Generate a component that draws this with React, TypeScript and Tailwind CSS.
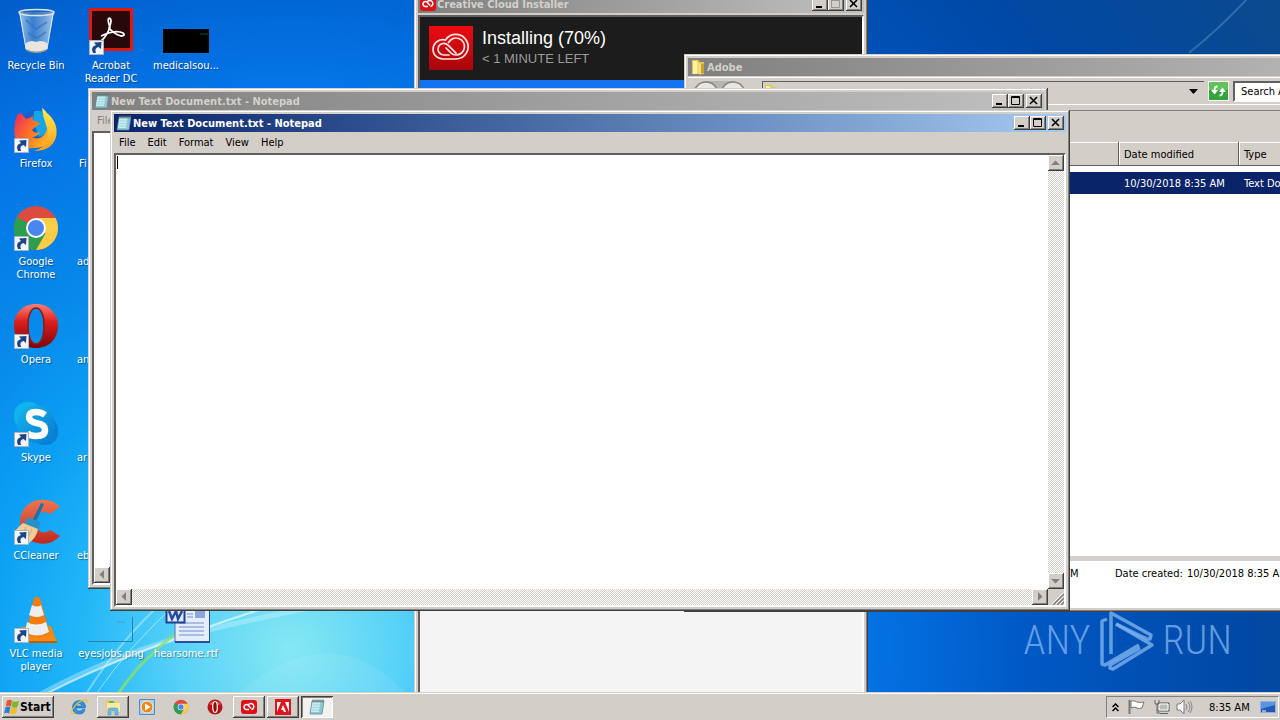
import type { ReactNode } from "react";

const UI = "font-['DejaVu_Sans_Condensed','DejaVu_Sans',sans-serif] text-[11px] leading-[13px]";
const RAISED =
  "bg-[#d4cec8] shadow-[inset_-1px_-1px_0_#404040,inset_1px_1px_0_#ffffff,inset_-2px_-2px_0_#808080]";
const SUNKEN = "border-2 border-t-[#606060] border-l-[#606060] border-r-white border-b-white";
const FRAME =
  "bg-[#d4cec8] p-1 shadow-[inset_-1px_-1px_0_#404040,inset_1px_1px_0_#d4cec8,inset_-2px_-2px_0_#808080,inset_2px_2px_0_#ffffff]";
const TRACK =
  "bg-[repeating-conic-gradient(#ffffff_0_25%,#d4cec8_0_50%)] bg-[length:2px_2px]";

/* ---------- icons ---------- */

function RecycleBinIcon() {
  return (
    <svg width="48" height="48" viewBox="0 0 48 48">
      <defs>
        <linearGradient id="bin" x1="0" x2="1">
          <stop offset="0" stopColor="#c8dcf0" stopOpacity=".8" />
          <stop offset=".4" stopColor="#5f92d0" stopOpacity=".6" />
          <stop offset="1" stopColor="#c4d8ec" stopOpacity=".85" />
        </linearGradient>
      </defs>
      <path d="M7 4 42 4 35 42Q24 47 14 42Z" fill="url(#bin)" />
      <path d="M13 36Q18 31 24 34Q31 31 36 36L35 42Q24 47 14 42Z" fill="#e9e6e2" />
      <path d="M14 41Q24 46 35 41L34 43Q24 47 15 43Z" fill="#97948f" />
      <path d="m14 12 10 9 11-7M16 25l9 5 9-6" stroke="#326fb8" strokeWidth="2" fill="none" opacity=".6" />
      <ellipse cx="24.500" cy="4.500" rx="17.500" ry="3" fill="#3a6aa4" fillOpacity=".4" stroke="#dbe3ea" strokeWidth="1.500" />
      <path d="m8 6 6 35M41 6l-6 35" stroke="#dce8f4" strokeWidth="1" fill="none" />
    </svg>
  );
}

function AcrobatIcon() {
  return (
    <svg width="48" height="48" viewBox="0 0 48 48">
      <path d="M2 0h44v43H2z" fill="#e2180c" />
      <path d="M5 3h38v37H5z" fill="#29080b" />
      <path
        d="M22 10q-2 2 1 9-3 9-9 14 1 3-4 6M22 10q4 1 0 10 5 6 12 8 5 0 2-3-7-4-22 3"
        stroke="#fff" strokeWidth="1.800" fill="none"
      />
    </svg>
  );
}

function FirefoxIcon() {
  return (
    <svg width="48" height="48" viewBox="0 0 48 48">
      <defs>
        <linearGradient id="ff" x1="0" y1=".2" x2="1" y2=".7">
          <stop offset="0" stopColor="#ef3158" />
          <stop offset=".5" stopColor="#ff7a1f" />
          <stop offset="1" stopColor="#ffc52b" />
        </linearGradient>
        <linearGradient id="ff2" x1="0" y1="0" x2="0" y2="1">
          <stop offset="0" stopColor="#fff04a" />
          <stop offset="1" stopColor="#ff9a1e" />
        </linearGradient>
      </defs>
      <circle cx="25" cy="23" r="19" fill="#195fc9" />
      <path d="M22 5Q33 3 38 12L36 27 27 31 21 15Z" fill="#13a5e8" />
      <path d="M5 9 9 7l5 6q4-1 7-3-1 4 1 5 5 1 6 3l-5 3-3 3q2 4 8 2-3 5-8 5 6 4 12-2 5-6 2-13l6-1q5 11-2 19-6 9-17 8Q8 44 4 34 0 24 5 9Z" fill="url(#ff)" />
      <path d="M30 2q2 1 5 5 12 10 9 24-4 14-22 14 10-3 13-11 2-8-1-15-3-8-4-17Z" fill="url(#ff2)" />
    </svg>
  );
}

function ChromeIcon({ size }: { size: number }) {
  return (
    <svg width={size} height={size} viewBox="0 0 48 48">
      <circle cx="24" cy="24" r="22" fill="#dd4b3e" />
      <path d="M24 24 4.900 13A22 22 0 0 0 24 46l9.500-16.500Z" fill="#2b9e50" />
      <path d="M24 14h19.600A22 22 0 0 1 24 46l9.500-16.500Z" fill="#fccd46" />
      <circle cx="24" cy="24" r="10" fill="#fff" />
      <circle cx="24" cy="24" r="8" fill="#4b86f0" />
    </svg>
  );
}

function OperaIcon({ size }: { size: number }) {
  return (
    <svg width={size} height={size} viewBox="0 0 48 48">
      <defs>
        <linearGradient id="op" x1="0" y1="0" x2="0" y2="1">
          <stop offset="0" stopColor="#ff8078" />
          <stop offset=".4" stopColor="#dc1f1c" />
          <stop offset="1" stopColor="#7d0508" />
        </linearGradient>
      </defs>
      <path fillRule="evenodd" d="M24 2C11 2 2 11 2 24s9 22 22 22 22-9 22-22S37 2 24 2Zm0 4c5 0 8 7 8 18s-3 18-8 18-8-7-8-18 3-18 8-18Z" fill="url(#op)" />
      <path d="M24 6c5 0 8 7 8 18s-3 18-8 18-8-7-8-18 3-18 8-18Z" stroke="#8f1716" strokeWidth="1.500" fill="none" />
    </svg>
  );
}

function OperaSmallIcon() {
  return (
    <svg width="16" height="16" viewBox="0 0 16 16">
      <circle cx="8" cy="8" r="7.500" fill="#b81414" />
      <path d="M2 5q6-6 12 0-6 3-12 0Z" fill="#ee6a62" opacity=".8" />
      <ellipse cx="8" cy="8" rx="2.300" ry="5.500" fill="#8f0c0c" stroke="#fff" strokeWidth="1.200" />
    </svg>
  );
}

function SkypeIcon() {
  return (
    <svg width="48" height="48" viewBox="0 0 48 48">
      <defs>
        <linearGradient id="sk" x1="0" y1="0" x2="1" y2="1">
          <stop offset="0" stopColor="#13b5ee" />
          <stop offset="1" stopColor="#087bd0" />
        </linearGradient>
      </defs>
      <rect x="2" y="2" width="28" height="28" rx="13" fill="#10b4ec" />
      <rect x="20" y="18" width="26" height="27" rx="12" fill="#0981d2" />
      <circle cx="24" cy="24" r="19" fill="url(#sk)" />
      <path d="M33 15q-4-3-9-3-7 0-7 5 0 4 7 6 9 1 9 7 0 6-9 6-6 0-9-3" stroke="#fff" strokeWidth="6.500" fill="none" />
    </svg>
  );
}

function CCleanerIcon() {
  return (
    <svg width="48" height="48" viewBox="0 0 48 48">
      <defs>
        <linearGradient id="cc" x1="0" y1="0" x2="0" y2="1">
          <stop offset="0" stopColor="#ef7650" />
          <stop offset="1" stopColor="#c0271d" />
        </linearGradient>
      </defs>
      <path d="m48 9-10 7q-7-5-13 2-5 8 1 14 6 5 12 0l10 6q-9 10-23 7Q8 41 8 24 9 5 27 2q13-2 21 7Z" fill="url(#cc)" />
      <path d="m29 5 3 1-8 18-4-1Z" fill="#1974ad" />
      <path d="m16 19 12 5-1 8-16-5Z" fill="#2a8fc2" />
      <path d="m11 25 15 6q-1 8-9 14L3 39q-4-4 8-14Z" fill="#f2cb99" />
      <path d="m14 29-5 11m11-9-6 12" stroke="#d4a269" />
    </svg>
  );
}

function VlcIcon() {
  return (
    <svg width="48" height="48" viewBox="0 0 48 48">
      <path d="m10 31 29-1 6 16H2Z" fill="#f38a14" />
      <path d="M2 45h43v2H2z" fill="#bd5e05" />
      <path d="M22 2q4-2 6 0l10 36q-12 7-24 0Z" fill="#f37b10" />
      <path d="m20 9-3 10q8 4 15 0L29 9q-4 3-9 0Zm-5 17-2 10q12 7 24 0l-3-10q-10 5-19 0Z" fill="#eee" />
    </svg>
  );
}

function MedicalIcon() {
  return (
    <svg width="46" height="48" viewBox="0 0 46 48">
      <path d="M0 21h46v24H0z" fill="#000" />
      <path d="M37 26h8" stroke="#0c5530" />
    </svg>
  );
}

function EyesJobsIcon() {
  return (
    <svg width="46" height="48" viewBox="0 0 46 48">
      <path d="M44.500 21v24.500H0" stroke="#2384a8" fill="none" />
      <path d="M29 26h8" stroke="#3aa0d0" />
    </svg>
  );
}

function RtfIcon() {
  return (
    <svg width="48" height="48" viewBox="0 0 48 48">
      <path d="M13 2h35v44H13z" fill="#e4edfb" stroke="#5072b8" />
      <path d="M13 46h35M48 2v44" stroke="#2f4d96" strokeWidth="2" />
      <path d="M33 13h10v9H33z" fill="#8ea6dc" />
      <path d="M25 18h6m-6 3h6M17 27h25M17 31h25M17 35h25M17 39h25" stroke="#6f8bc8" />
      <path d="M4.500 8.500h18v18h-18z" fill="#dfe8fa" stroke="#1d3f93" strokeWidth="2" />
      <path d="m7 15 3 8 4-8 2 8 4-8" stroke="#2749a3" strokeWidth="2.500" fill="none" />
    </svg>
  );
}

function ShortcutArrow() {
  return (
    <svg className="absolute bottom-px left-[2px]" width="15" height="15" viewBox="0 0 15 15">
      <path d="M.5.500h14v14H.5z" fill="#f2f6fb" stroke="#a9b4c2" />
      <path d="M4 13Q1 7 7 5L5 2.500l7.500-.5-.5 7-2.500-2Q5 8 7 13Z" fill="#1d4585" />
    </svg>
  );
}

function NotepadIcon() {
  return (
    <svg width="16" height="16" viewBox="0 0 16 16">
      <path d="M3 2h12l-2 13H1Z" fill="#8fc6d4" stroke="#56818c" strokeWidth=".7" />
      <path d="M3.500 3h8L10 13H2Z" fill="#c5edf2" />
      <path d="m4 6 9 0m-9.500 2.500h9M3 11h9" stroke="#8cc4d0" strokeWidth=".6" />
      <path d="M4 .5v3m2-3v3m2-3v3m2-3v3m2-3v3m2-3v3" stroke="#5c6c70" />
    </svg>
  );
}

function FolderIcon() {
  return (
    <svg width="16" height="16" viewBox="0 0 16 16">
      <path d="M2 1h6l2 2h4v12H2z" fill="#e2c451" />
      <path d="M3 2h4v13H3z" fill="#fbf2a6" />
      <path d="m7 3 4 2v11l-4-2Z" fill="#f3dc74" />
      <path d="M11 5h3v9h-3z" fill="#caa32f" />
    </svg>
  );
}

function CloudMark() {
  return (
    <svg width="44" height="44" viewBox="0 0 44 44">
      <defs>
        <linearGradient id="ccm" x1="0" y1="0" x2="0" y2="1">
          <stop offset="0" stopColor="#ed0b12" />
          <stop offset="1" stopColor="#a6060b" />
        </linearGradient>
      </defs>
      <rect width="44" height="44" fill="url(#ccm)" />
      <g fill="none" stroke="#ffe4e2" strokeWidth="1.700" strokeLinecap="round">
        <path d="M14 33h13a12.300 12.300 0 1 0-10.500-19A9.700 9.700 0 1 0 14 33Z" />
        <path d="M20 29h-5a5.800 5.800 0 1 1 4-9.800l8 8" />
        <path d="M19.500 16.500a8.500 8.500 0 1 1 7.500 12.500q-3 0-5-2l-5-5" />
      </g>
    </svg>
  );
}

function CloudSmallIcon() {
  return (
    <svg width="16" height="16" viewBox="0 0 16 16">
      <rect y="1" width="16" height="14" rx="3" fill="#dd1219" />
      <path d="M8 10.500H5.500a2.500 2.500 0 1 1 2-4l2.500 3M7 6.500a3 3 0 1 1 3.500 4" stroke="#fff" strokeWidth="1.500" fill="none" />
    </svg>
  );
}

function AdobeIcon() {
  return (
    <svg width="16" height="16" viewBox="0 0 16 16">
      <path d="M0 0h16v16H0z" fill="#e2131b" />
      <path d="M2 3h4L2 13Zm8 0h4v10ZM8 6l3.200 7H9l-1-2H6Z" fill="#fff" />
    </svg>
  );
}

function IeIcon() {
  return (
    <svg width="18" height="18" viewBox="0 0 18 18">
      <path d="M15.500 10H6q0 3 3.500 3 2 0 3-1.500h2.500q-1 4.500-5.500 4.500Q2.500 16 2.500 9.500T9.500 2.500Q15.500 3 15.500 10ZM6 8h6q-.5-2.500-3-2.500T6 8Z" fill="#2b92e4" stroke="#1264b4" strokeWidth=".6" />
      <path d="M16.500 5Q18 0 12.500 2.500 6 5 2 12q-2 5 3 3" stroke="#f0c031" strokeWidth="1.200" fill="none" />
    </svg>
  );
}

function ExplorerIcon() {
  return (
    <svg width="18" height="18" viewBox="0 0 18 18">
      <path d="M2 2h6l1 2h7v11H2z" fill="#eecb62" />
      <path d="M3 5h13v9H3z" fill="#faeba4" />
      <path d="M5 3h5v2H5z" fill="#64b85a" />
      <path d="M4 17v-5q0-2 2-2h6q2 0 2 2v5h-3v-4H7v4Z" fill="#6bbce8" stroke="#378fc4" strokeWidth=".5" />
    </svg>
  );
}

function MediaIcon() {
  return (
    <svg width="16" height="16" viewBox="0 0 16 16">
      <path d="M.5.500h15v15H.5z" fill="#a5cff2" stroke="#4f8fc8" />
      <circle cx="8" cy="8" r="6" fill="#f38818" stroke="#fff" strokeWidth=".8" />
      <path d="m6 4.500 5.500 3.500L6 11.500Z" fill="#fff" />
    </svg>
  );
}

function WindowsFlag() {
  return (
    <svg width="16" height="16" viewBox="0 0 16 16">
      <path d="M3 1.500q2.500-1.500 5 0L6.800 7.500q-2.500-1.500-5 0Z" fill="#e8572a" />
      <path d="M8.500 2q2.500 1.500 6.500 0l-1.500 6q-3 1.500-6 0Z" fill="#7ab92f" />
      <path d="M1.500 8.200q2.500-1.500 5 0L5 14.500q-2.500-1.500-5 0Z" fill="#2e7bd0" />
      <path d="M7.200 8.500q2.500 1.500 6 0l-1.500 6q-3 1.500-6 0Z" fill="#f6bd22" />
    </svg>
  );
}

/* ---------- desktop ---------- */

type Shortcut = { label: string; place: string; icon?: ReactNode; arrow?: boolean; align?: string };

const shortcuts: Shortcut[] = [
  { label: "Recycle Bin", place: "col-start-1 row-start-1", icon: <RecycleBinIcon /> },
  { label: "Firefox", place: "col-start-1 row-start-2", icon: <FirefoxIcon />, arrow: true },
  { label: "Google Chrome", place: "col-start-1 row-start-3", icon: <ChromeIcon size={48} />, arrow: true },
  { label: "Opera", place: "col-start-1 row-start-4", icon: <OperaIcon size={48} />, arrow: true },
  { label: "Skype", place: "col-start-1 row-start-5", icon: <SkypeIcon />, arrow: true },
  { label: "CCleaner", place: "col-start-1 row-start-6", icon: <CCleanerIcon />, arrow: true },
  { label: "VLC media player", place: "col-start-1 row-start-7", icon: <VlcIcon />, arrow: true },
  { label: "Acrobat Reader DC", place: "col-start-2 row-start-1", icon: <AcrobatIcon />, arrow: true },
  { label: "Fi", place: "col-start-2 row-start-2", align: "pl-1 text-left" },
  { label: "ad", place: "col-start-2 row-start-3", align: "pl-[2px] text-left" },
  { label: "an", place: "col-start-2 row-start-4", align: "pl-[2px] text-left" },
  { label: "ar", place: "col-start-2 row-start-5", align: "pl-[2px] text-left" },
  { label: "eb", place: "col-start-2 row-start-6", align: "pl-[2px] text-left" },
  { label: "eyesjobs.png", place: "col-start-2 row-start-7", icon: <EyesJobsIcon /> },
  { label: "medicalsou...", place: "col-start-3 row-start-1", icon: <MedicalIcon /> },
  { label: "hearsome.rtf", place: "col-start-3 row-start-7", icon: <RtfIcon /> },
];

function Wallpaper() {
  return (
    <svg className="absolute inset-0" width="100%" height="100%" aria-hidden="true">
      <g fill="none" strokeLinecap="round">
        <path d="M30 700Q110 655 200 632T420 590" stroke="#c9f6ff" strokeWidth="5" opacity=".4" />
        <path d="M46 694Q130 650 290 600" stroke="#fff" strokeWidth="2" opacity=".6" />
        <path d="M86 694Q120 640 165 600" stroke="#d5f7ff" strokeWidth="2" opacity=".45" />
        <path d="M96 694Q130 645 180 600" stroke="#d5f7ff" strokeWidth="1" opacity=".6" />
        <path d="M118 694Q150 645 220 604" stroke="#8be06a" strokeWidth="3" opacity=".8" />
        <path d="M1190 52Q1220 28 1246 0" stroke="#6aa0d0" strokeWidth="2" opacity=".4" />
      </g>
      <path d="M240 692Q330 615 405 692Z" fill="#fff" opacity=".08" />
    </svg>
  );
}

function DesktopIcons() {
  return (
    <ul className="relative grid auto-rows-[98px] grid-cols-[repeat(3,72px)] gap-x-[3px] pt-2 text-white [text-shadow:1px_1px_1px_#00000066]">
      {shortcuts.map((s) => (
        <li key={s.label} className={`${s.place} flex flex-col items-center`}>
          <div className="relative flex h-12 w-12 justify-center">
            {s.icon}
            {s.arrow && <ShortcutArrow />}
          </div>
          <span className={`${s.align ?? "text-center"} mt-[3px] w-full`}>{s.label}</span>
        </li>
      ))}
    </ul>
  );
}

/* ---------- window parts ---------- */

function CaptionButtons({ maxDisabled }: { maxDisabled?: boolean }) {
  return (
    <div className="flex pr-[2px]">
      <button aria-label="Minimize" className={`${RAISED} h-[14px] w-4`}>
        <svg width="16" height="14" viewBox="0 0 16 14"><path d="M4 9h6v2H4z" /></svg>
      </button>
      <button aria-label="Maximize" className={`${RAISED} mr-[2px] h-[14px] w-4`}>
        <svg width="16" height="14" viewBox="0 0 16 14">
          <path d="M3.500 2.500h8v8h-8zM3 3.500h9" fill="none" stroke={maxDisabled ? "#9a9690" : "#000"} />
        </svg>
      </button>
      <button aria-label="Close" className={`${RAISED} h-[14px] w-4`}>
        <svg width="16" height="14" viewBox="0 0 16 14"><path d="m4 3 7 7m0-7-7 7" stroke="#000" strokeWidth="1.600" /></svg>
      </button>
    </div>
  );
}

function TitleBar({ icon, title, active, children }: { icon: ReactNode; title: string; active?: boolean; children?: ReactNode }) {
  const tone = active
    ? "from-[#0a246a] to-[#a6caf0] text-white"
    : "from-[#808080] to-[#c0c0c0] text-[#d4d0c8]";
  return (
    <header className={`${tone} flex h-[18px] shrink-0 items-center bg-linear-to-r pl-[2px] font-bold`}>
      {icon}
      <h2 className="ml-px flex-1 whitespace-nowrap">{title}</h2>
      {children}
    </header>
  );
}

function ScrollButton({ label, d }: { label: string; d: string }) {
  return (
    <button aria-label={label} className={`${RAISED} h-4 w-4 shrink-0`}>
      <svg width="16" height="16" viewBox="0 0 16 16"><path d={d} fill="#808080" /></svg>
    </button>
  );
}

function Notepad({ active, place }: { active?: boolean; place: string }) {
  return (
    <section className={`${FRAME} ${place} absolute flex h-[501px] w-[960px] flex-col`}>
      <TitleBar icon={<NotepadIcon />} title="New Text Document.txt - Notepad" active={active}>
        <CaptionButtons />
      </TitleBar>
      <nav className={`${active ? "text-black" : "text-[#808080]"} flex h-[21px] items-center gap-3 pl-[5px]`}>
        {["File", "Edit", "Format", "View", "Help"].map((m) => (
          <button key={m}>{m}</button>
        ))}
      </nav>
      <div className={`${SUNKEN} grid flex-1 grid-cols-[1fr_16px] grid-rows-[1fr_16px] bg-[#d4cec8]`}>
        <div className="relative">
          <textarea aria-label="Document text" className="block h-full w-full resize-none bg-white p-px outline-none" />
          {active && <i className="absolute top-px left-px h-[13px] w-px bg-black" />}
        </div>
        <div className={`${TRACK} flex flex-col justify-between`}>
          <ScrollButton label="Scroll up" d="M3 10 7.500 5.500 12 10Z" />
          <ScrollButton label="Scroll down" d="M3 6 7.500 10.500 12 6Z" />
        </div>
        <div className={`${TRACK} flex justify-between`}>
          <ScrollButton label="Scroll left" d="M10 3 5.500 7.500 10 12Z" />
          <ScrollButton label="Scroll right" d="M6 3 10.500 7.500 6 12Z" />
        </div>
        <svg width="16" height="16" viewBox="0 0 16 16">
          <path d="M5 16 16 5M9 16l7-7m-3 7 3-3" stroke="#808080" strokeWidth="1.500" />
          <path d="M4 15 15 4M8 15l7-7m-3 7 3-3" stroke="#fff" />
        </svg>
      </div>
    </section>
  );
}

function Installer() {
  return (
    <section className={`${FRAME} absolute -top-[9px] -bottom-5 left-[414px] flex w-[454px] flex-col`}>
      <TitleBar icon={<CloudSmallIcon />} title="Creative Cloud Installer">
        <CaptionButtons maxDisabled />
      </TitleBar>
      <div className={`${SUNKEN} mt-[2px] flex flex-1 flex-col bg-[#f4f4f4]`}>
        <div className="flex h-[63px] items-start bg-[#1c1c1c] pt-[9px] pl-[9px]">
          <CloudMark />
          <div className="ml-[9px] font-['Liberation_Sans',sans-serif]">
            <p className="text-[18px] leading-6 text-white">Installing (70%)</p>
            <p className="text-[13px] leading-[18px] text-[#9a9a9a]">&lt; 1 MINUTE LEFT</p>
          </div>
        </div>
        <div className="h-9 bg-[#1473f0]" />
      </div>
    </section>
  );
}

const headCell = "h-6 px-[5px] text-left font-normal shadow-[inset_-1px_-1px_0_#606060,inset_1px_1px_0_#ffffff]";

function Explorer() {
  return (
    <section className={`${FRAME} absolute top-[54px] left-[684px] flex h-[558px] w-[760px] flex-col`}>
      <TitleBar icon={<FolderIcon />} title="Adobe" />
      <div className="mt-px flex h-7 items-center border-t border-b border-white pl-1">
        <svg width="54" height="26" viewBox="0 0 54 26">
          <path d="M13 3h28v18H13z" fill="#b8b4ae" />
          <circle cx="14" cy="16" r="12" fill="#e8e6e2" stroke="#85827e" strokeWidth="1.500" />
          <circle cx="41" cy="16" r="12" fill="#e8e6e2" stroke="#85827e" strokeWidth="1.500" />
        </svg>
        <div className="ml-4 flex h-[21px] w-[442px] items-center justify-between border-t border-l border-[#606060] pr-[6px]">
          <FolderIcon />
          <svg width="9" height="5" viewBox="0 0 9 5"><path d="M0 0h9L4.500 5Z" /></svg>
        </div>
        <button aria-label="Refresh" className="ml-1 flex border border-white">
          <svg width="19" height="18" viewBox="0 0 19 18">
            <path d="M0 0h19v18H0z" fill="#35a33b" />
            <path d="M0 0h19v8H0z" fill="#5fc25c" />
            <path d="M8.500 4.500q-3 0-3 4" stroke="#fff" strokeWidth="1.800" fill="none" />
            <path d="M2 8h7l-3.500 4.500Z" fill="#fff" />
            <path d="M10.500 13.500q3 0 3-4" stroke="#fff" strokeWidth="1.800" fill="none" />
            <path d="M10 10h7l-3.500-4.500Z" fill="#fff" />
          </svg>
        </button>
        <input
          aria-label="Search"
          placeholder="Search Adobe"
          className="ml-1 h-[21px] w-[160px] border-2 border-[#606060] border-r-white border-b-white bg-white pl-[6px] placeholder:text-black"
        />
      </div>
      <div className="mt-[5px] h-8 shrink-0 border-t border-[#808080]" />
      <div className="flex-1 bg-white">
        <table className="w-full table-fixed border-collapse">
          <thead className="bg-[#d4cec8]">
            <tr>
              <th className={`${headCell} w-[431px]`} />
              <th className={`${headCell} w-[120px]`}>Date modified</th>
              <th className={headCell}>Type</th>
            </tr>
          </thead>
          <tbody>
            <tr className="h-[6px]" />
            <tr className="h-[22px] bg-[#0a246a] text-white">
              <td />
              <td className="px-[5px]">10/30/2018 8:35 AM</td>
              <td className="px-[5px]">Text Document</td>
            </tr>
          </tbody>
        </table>
      </div>
      <div className="h-[5px] bg-[#d4cec8]" />
      <div className="flex h-[47px] bg-white pt-[6px] pl-[382px]">
        <span className="w-[45px]">M</span>
        <span className="w-[72px]">Date created:</span>
        <span>10/30/2018 8:35 AM</span>
      </div>
    </section>
  );
}

function Watermark() {
  return (
    <div className="absolute right-12 bottom-5 flex items-center gap-2 font-['Noto_Sans_ExtraCondensed_Light','Noto_Sans_ExtraCondensed_ExtraLight','Roboto_Condensed_Light','Roboto_Condensed','Open_Sans_Condensed_Light','Liberation_Sans_Narrow','DejaVu_Sans_Condensed',sans-serif] text-[40px] leading-[62px] font-light text-[#7cb2ee]/80">
      <span>ANY</span>
      <svg width="56" height="62" viewBox="0 0 56 62" fill="none" stroke="currentColor" strokeWidth="3.500" strokeLinejoin="round">
        <path d="m8 9-5 2v43l3 1 34-20" />
        <path d="M12 44V3l40 22-1 4h-3L17 14" />
        <path d="m17 14 36 21-39 24-3-1v-3l30-17" />
      </svg>
      <span>RUN</span>
    </div>
  );
}

/* ---------- taskbar ---------- */

function TaskButton({ label, icon, look }: { label: string; icon: ReactNode; look: string }) {
  return (
    <button aria-label={label} className={`${look} flex h-[22px] w-8 items-center justify-center`}>
      {icon}
    </button>
  );
}

function Taskbar() {
  return (
    <footer className="relative flex h-7 shrink-0 items-center justify-between border-t border-[#d4cec8] bg-[#d4cec8] pt-px pl-[2px] shadow-[inset_0_1px_0_#ffffff]">
      <div className="flex items-center gap-[2px]">
        <button className={`${RAISED} mr-[7px] flex h-[22px] w-[52px] items-center pl-[2px] text-xs font-bold`}>
          <WindowsFlag />
          Start
        </button>
        <TaskButton label="Internet Explorer" icon={<IeIcon />} look="" />
        <TaskButton label="Windows Explorer" icon={<ExplorerIcon />} look={RAISED} />
        <TaskButton label="Media Player" icon={<MediaIcon />} look="" />
        <TaskButton label="Chrome" icon={<ChromeIcon size={16} />} look="" />
        <TaskButton label="Opera" icon={<OperaSmallIcon />} look="" />
        <TaskButton label="Creative Cloud" icon={<CloudSmallIcon />} look={RAISED} />
        <TaskButton label="Adobe" icon={<AdobeIcon />} look={RAISED} />
        <TaskButton label="Notepad" icon={<NotepadIcon />} look="bg-[#f4f2ef] shadow-[inset_1px_1px_0_#404040,inset_-1px_-1px_0_#ffffff,inset_2px_2px_0_#808080]" />
      </div>
      <div className="mr-px flex h-[22px] w-[173px] items-center border border-t-[#808080] border-l-[#808080] border-r-white border-b-white pl-[5px]">
        <svg width="7" height="9" viewBox="0 0 7 9"><path d="m.5 4 3-3 3 3m-6 4 3-3 3 3" stroke="#000" strokeWidth="1.500" fill="none" /></svg>
        <svg className="ml-[9px]" width="17" height="16" viewBox="0 0 17 16">
          <path d="M1.500 1v14" stroke="#777" strokeWidth="2" />
          <path d="M3 2q3-1 6 1 3 1 7 0l-2 6q-3 1-5 0-3-2-6 0Z" fill="#fff" stroke="#777" />
        </svg>
        <svg className="ml-2" width="17" height="16" viewBox="0 0 17 16">
          <path d="M5 4h11v8H5z" fill="#bdbab5" stroke="#555" />
          <path d="M6 5h9v6H6z" stroke="#fff" fill="none" />
          <path d="M7 14.500h8M2 1v4h4V1M4 5v9h3" stroke="#666" fill="none" />
        </svg>
        <svg className="ml-[6px]" width="17" height="16" viewBox="0 0 17 16">
          <path d="M1 5h3l4-4v14l-4-4H1Z" fill="#fff" stroke="#777" />
          <path d="M10 5q2 3 0 6m2-8q4 5 0 10m2-11q4 6 0 12" stroke="#888" fill="none" />
        </svg>
        <time className="ml-4 flex-1 whitespace-nowrap">8:35 AM</time>
        <svg className="mr-[2px]" width="16" height="14" viewBox="0 0 16 14">
          <path d="M.5 1.500h15v11H.5z" fill="#2359b4" stroke="#8fb1dc" />
          <path d="M1 2h14v3L1 9Z" fill="#5c95df" />
          <path d="M2 11h4" stroke="#fff" />
        </svg>
      </div>
    </footer>
  );
}

export default function App() {
  return (
    <div className={`${UI} flex h-screen flex-col overflow-hidden text-black`}>
      <main className="relative min-h-0 flex-1 overflow-hidden bg-[radial-gradient(circle_at_290px_650px,#86e8f2_0px,#58d2f8_110px,#22b6f8_210px,#0b9ff4_310px,#0788ea_420px,#0474e6_570px,#0058c4_740px,#0048a4_960px,#0d4a86_1250px)]">
        <Wallpaper />
        <DesktopIcons />
        <Installer />
        <Explorer />
        <Notepad place="top-[88px] left-[88px]" />
        <Notepad active place="top-[110px] left-[110px]" />
        <Watermark />
      </main>
      <Taskbar />
    </div>
  );
}
